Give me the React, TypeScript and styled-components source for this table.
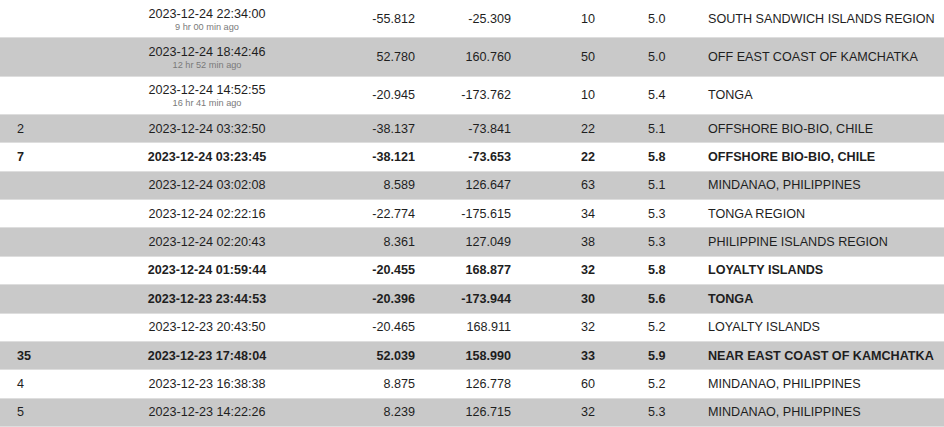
import * as React from "react";
import styled, { createGlobalStyle } from "styled-components";

const GlobalStyle = createGlobalStyle`
  html, body {
    margin: 0;
    padding: 0;
    background: #ffffff;
  }
  body {
    font-family: "Liberation Sans", Arial, sans-serif;
    color: #1e1e1e;
    overflow: hidden;
  }
`;

interface IQuake {
  count: string;
  time: string;
  ago?: string;
  lat: string;
  lon: string;
  depth: string;
  mag: string;
  region: string;
}

const quakes: IQuake[] = [
  { count: "", time: "2023-12-24 22:34:00", ago: "9 hr 00 min ago", lat: "-55.812", lon: "-25.309", depth: "10", mag: "5.0", region: "SOUTH SANDWICH ISLANDS REGION" },
  { count: "", time: "2023-12-24 18:42:46", ago: "12 hr 52 min ago", lat: "52.780", lon: "160.760", depth: "50", mag: "5.0", region: "OFF EAST COAST OF KAMCHATKA" },
  { count: "", time: "2023-12-24 14:52:55", ago: "16 hr 41 min ago", lat: "-20.945", lon: "-173.762", depth: "10", mag: "5.4", region: "TONGA" },
  { count: "2", time: "2023-12-24 03:32:50", lat: "-38.137", lon: "-73.841", depth: "22", mag: "5.1", region: "OFFSHORE BIO-BIO, CHILE" },
  { count: "7", time: "2023-12-24 03:23:45", lat: "-38.121", lon: "-73.653", depth: "22", mag: "5.8", region: "OFFSHORE BIO-BIO, CHILE" },
  { count: "", time: "2023-12-24 03:02:08", lat: "8.589", lon: "126.647", depth: "63", mag: "5.1", region: "MINDANAO, PHILIPPINES" },
  { count: "", time: "2023-12-24 02:22:16", lat: "-22.774", lon: "-175.615", depth: "34", mag: "5.3", region: "TONGA REGION" },
  { count: "", time: "2023-12-24 02:20:43", lat: "8.361", lon: "127.049", depth: "38", mag: "5.3", region: "PHILIPPINE ISLANDS REGION" },
  { count: "", time: "2023-12-24 01:59:44", lat: "-20.455", lon: "168.877", depth: "32", mag: "5.8", region: "LOYALTY ISLANDS" },
  { count: "", time: "2023-12-23 23:44:53", lat: "-20.396", lon: "-173.944", depth: "30", mag: "5.6", region: "TONGA" },
  { count: "", time: "2023-12-23 20:43:50", lat: "-20.465", lon: "168.911", depth: "32", mag: "5.2", region: "LOYALTY ISLANDS" },
  { count: "35", time: "2023-12-23 17:48:04", lat: "52.039", lon: "158.990", depth: "33", mag: "5.9", region: "NEAR EAST COAST OF KAMCHATKA" },
  { count: "4", time: "2023-12-23 16:38:38", lat: "8.875", lon: "126.778", depth: "60", mag: "5.2", region: "MINDANAO, PHILIPPINES" },
  { count: "5", time: "2023-12-23 14:22:26", lat: "8.239", lon: "126.715", depth: "32", mag: "5.3", region: "MINDANAO, PHILIPPINES" },
];

const STable = styled.div`
  width: 944px;
  display: flex;
  flex-direction: column;
  font-size: 12.6px;
`;

interface IRowStyle {
  shaded: boolean;
  strong: boolean;
  tall: boolean;
}

const SRow = styled.div<IRowStyle>`
  display: grid;
  grid-template-columns: 130px 154px 131px 96px 84px 113px 1fr;
  align-items: center;
  box-sizing: border-box;
  height: ${({ tall }) => (tall ? "38.33px" : "28.36px")};
  border-bottom: 1px solid #dedede;
  background-color: ${({ shaded }) => (shaded ? "#c9c9c9" : "#ffffff")};
  font-weight: ${({ strong }) => (strong ? "bold" : "normal")};
`;

const SCount = styled.div`
  padding-left: 17px;
`;

const STime = styled.div`
  display: flex;
  flex-direction: column;
  align-items: center;
  line-height: 15px;
  padding-top: 1px;
`;

const SAgo = styled.span`
  font-size: 9.2px;
  line-height: 10px;
  color: #7a7a7a;
  font-weight: normal;
`;

const SNum = styled.div`
  text-align: right;
`;

const SMag = styled.div`
  padding-left: 53px;
`;

const SRegion = styled.div`
  white-space: nowrap;
`;

const App = () => {
  return (
    <>
      <GlobalStyle />
      <STable>
        {quakes.map((q, i) => (
          <SRow
            key={q.time}
            shaded={i % 2 === 1}
            strong={parseFloat(q.mag) >= 5.5}
            tall={!!q.ago}
          >
            <SCount>{q.count}</SCount>
            <STime>
              <span>{q.time}</span>
              {q.ago && <SAgo>{q.ago}</SAgo>}
            </STime>
            <SNum>{q.lat}</SNum>
            <SNum>{q.lon}</SNum>
            <SNum>{q.depth}</SNum>
            <SMag>{q.mag}</SMag>
            <SRegion>{q.region}</SRegion>
          </SRow>
        ))}
      </STable>
    </>
  );
};

export default App;
